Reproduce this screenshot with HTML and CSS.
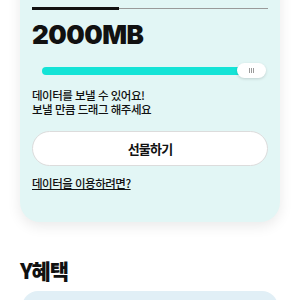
FILE: index.html
```html
<!DOCTYPE html>
<html lang="ko">
    <head>
        <meta charset="utf-8">
        <title>데이터 선물</title>
        <link rel="stylesheet" href="styles.css">
    </head>
    <body>
        <div class="page">
            <div class="gift-card">
                <div class="tabs">
                    <div class="tab active">선물하기</div>
                    <div class="tab">조르기</div>
                    <div class="tab">받은내역</div>
                </div>

                <p class="amount">2000MB</p>

                <div class="slider">
                    <div class="slider-fill"></div>
                    <div class="slider-thumb"><span></span><span></span><span></span></div>
                </div>

                <p class="guide">데이터를 보낼 수 있어요!<br>보낼 만큼 드래그 해주세요</p>

                <button class="gift-btn">선물하기</button>

                <a class="help-link" href="#">데이터을 이용하려면?</a>
            </div>

            <h2 class="section-title">Y혜택</h2>

            <div class="benefit-card"></div>
        </div>
    </body>
</html>
```

FILE: styles.css
```css
body {
    margin: 0;
    background-color: #ffffff;
    font-family: "Noto Sans CJK KR", "Noto Sans", sans-serif;
    color: #111111;
}

.page {
    padding: 0 20px;
    margin-top: -40px;
}

.gift-card {
    background-color: #e2f6f5;
    border-radius: 20px;
    padding: 20px 12px 29px;
    box-shadow: 0 4px 14px rgba(0, 0, 0, 0.09);
}

.tabs {
    display: flex;
    border-bottom: 1px solid #9a9a9a;
}

.tab {
    flex: 1;
    font-size: 11px;
    line-height: 18px;
    padding-bottom: 9px;
    text-align: center;
    color: #444;
    border-bottom: 3px solid transparent;
    margin-bottom: -2px;
}

.tab.active {
    flex: 0 0 87px;
    border-bottom-color: #111;
    font-weight: bold;
    color: #111;
}

.amount {
    margin: 10px 0 0;
    font-family: Inter, sans-serif;
    font-weight: 900;
    font-size: 26px;
    line-height: 32px;
    letter-spacing: -0.5px;
}

.slider {
    display: flex;
    align-items: center;
    height: 15px;
    margin: 12px 2px 0 10px;
}

.slider-fill {
    flex: 1;
    height: 8px;
    border-radius: 4px;
    background-color: #14e3d6;
}

.slider-thumb {
    flex: 0 0 29px;
    height: 15px;
    margin-left: -8px;
    border-radius: 8px;
    background-color: #ffffff;
    box-shadow: 0 1px 3px rgba(0, 0, 0, 0.15);
    display: flex;
    justify-content: center;
    align-items: center;
    gap: 1px;
}

.slider-thumb span {
    width: 1px;
    height: 5px;
    background-color: #9a9a9a;
}

.guide {
    margin: 11px 0 0;
    font-size: 11.5px;
    font-weight: 500;
    line-height: 13.5px;
    letter-spacing: -0.5px;
}

.gift-btn {
    display: block;
    width: 100%;
    height: 35px;
    margin-top: 15px;
    border: 1px solid #dcdcdc;
    border-radius: 18px;
    background-color: #ffffff;
    font-family: inherit;
    font-size: 13px;
    font-weight: bold;
    letter-spacing: -0.8px;
    color: #111;
}

.help-link {
    display: inline-block;
    margin-top: 10px;
    font-size: 11.5px;
    font-weight: 500;
    line-height: 14px;
    letter-spacing: -0.5px;
    color: #111;
}

.section-title {
    margin: 35px 0 0;
    font-size: 21px;
    font-weight: 900;
    line-height: 26px;
    letter-spacing: -1.2px;
}

.benefit-card {
    height: 60px;
    margin: 8px 2px 0;
    border-radius: 16px;
    background-color: #e1eff6;
}
```
